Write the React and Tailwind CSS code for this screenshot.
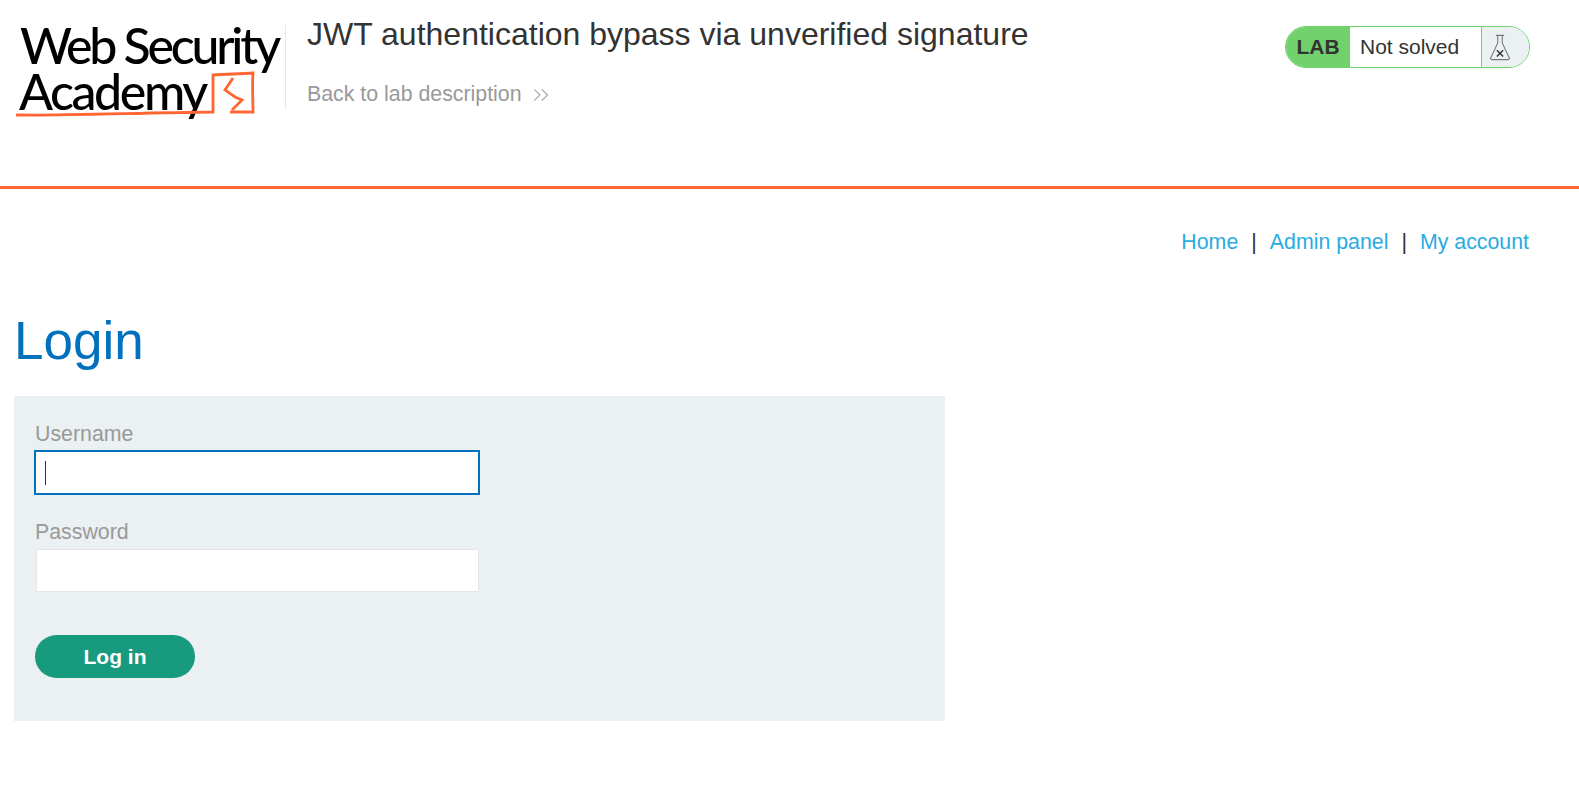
import { ChevronsRight } from 'lucide-react';

const Logo = () => (
    <div className="relative w-[265px] h-[100px] shrink-0 font-['Lato',sans-serif] font-medium text-black text-[50px] leading-[46px]">
        <div className="pl-[5px] -mt-[3px] tracking-[-3.2px] whitespace-nowrap">Web Security</div>
        <div className="pl-[4px] tracking-[-2.4px] whitespace-nowrap">Academy</div>
        <svg className="absolute left-0 top-0" width="265" height="100" viewBox="0 0 265 100" fill="none" stroke="#ff6633" strokeWidth="2.8">
            <path d="M1 90 C40 91 120 88 198 87 L198 50 C212 49 225 49 238 48 C237 60 238 75 238 87 L215 87" />
            <path d="M218 53 L210 65 L220 72 L227 75 L217 85" />
        </svg>
    </div>
);

const Flask = () => (
    <svg width="22" height="27" viewBox="0 0 24 30" fill="none" stroke="#777" strokeWidth="1.2">
        <path d="M7.500 1.500 H16.500 M9.500 1.500 V10 L1.500 27 Q1.500 28.500 3 28.500 H21 Q22.500 28.500 22.500 27 L14.500 10 V1.500" />
        <path d="M8.500 18 L15.500 25 M15.500 18 L8.500 25" stroke="#333" strokeWidth="1.6" />
    </svg>
);

const LabStatus = () => (
    <div className="flex h-[42px] w-[245px] rounded-[22px] border border-[#70d16d] overflow-hidden">
        <div className="w-[64px] bg-[#70d16d] flex items-center justify-center font-bold text-[21px] text-[#333332]">LAB</div>
        <div className="flex-1 flex items-center pl-[10px] text-[21px] text-[#333332]">Not solved</div>
        <div className="w-[48px] bg-[#ebf0f2] border-l border-[#70d16d] flex items-center pl-[7px]">
            <Flask />
        </div>
    </div>
);

export default function App() {
    return (
        <div className="min-h-screen bg-white font-['Liberation_Sans',Arial,sans-serif] text-[#333332]">
            {/* Header */}
            <header className="h-[189px] border-b-[3px] border-[#ff6633] flex pl-[15px] pt-[25px] pr-[49px]">
                <Logo />
                <div className="ml-[5px] h-[84px] border-l border-[#e6e6e6] pl-[21px]">
                    <h2 className="pt-px text-[32px] leading-[17px] whitespace-nowrap">JWT authentication bypass via unverified signature</h2>
                    <a className="flex items-center mt-[36px] text-[21.33px] text-[#999] whitespace-nowrap">
                        Back to lab description
                        <ChevronsRight className="ml-[6px] w-[26px] h-[26px] text-[#a6a6a6]" strokeWidth={1} />
                    </a>
                </div>
                <div className="ml-auto pt-px">
                    <LabStatus />
                </div>
            </header>

            {/* Nav */}
            <nav className="flex justify-end pr-[50px] pt-[41px] text-[21.33px] leading-[24px] text-[#333332]">
                <a className="text-[#29abe2]">Home</a>
                <span className="mx-[13px]">|</span>
                <a className="text-[#29abe2]">Admin panel</a>
                <span className="mx-[13px]">|</span>
                <a className="text-[#29abe2]">My account</a>
            </nav>

            {/* Main Content */}
            <main className="pl-[14px] pt-[57px]">
                <h1 className="text-[53px] leading-[60px] text-[#0071bc]">Login</h1>
                <form className="mt-[25px] w-[931px] h-[325px] bg-[#ebf0f2] pl-[21px] pt-[26px]">
                    <label className="block mb-[4px] text-[21.33px] leading-[24px] text-[#999]">Username</label>
                    <div className="relative -ml-px w-[446px]">
                        <input className="block w-full h-[45px] bg-white border-2 border-[#0071bc] outline-none caret-transparent" />
                        <span className="absolute left-[11px] top-[11px] w-px h-[24px] bg-[#333332]" />
                    </div>
                    <label className="block mt-[25px] mb-[5px] text-[21.33px] leading-[24px] text-[#999]">Password</label>
                    <input type="password" className="block w-[443px] h-[43px] ml-px bg-white border border-[#e6e6e6] outline-none" />
                    <button type="button" className="block mt-[43px] w-[160px] h-[43px] rounded-[22px] bg-[#179a7d] text-white font-bold text-[21px]">Log in</button>
                </form>
            </main>
        </div>
    );
}
